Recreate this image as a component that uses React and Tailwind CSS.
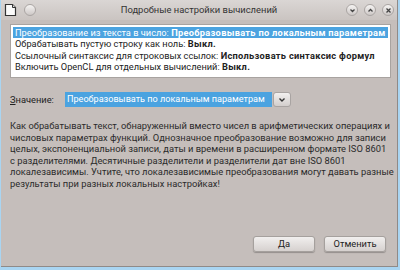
import React from "react";

function CircleBtn({ children }) {
  return (
    <div className="w-[12px] h-[12px] rounded-full border border-[#aaa5a3] bg-gradient-to-b from-[#f6f4f3] to-[#cdc8c6] flex items-center justify-center">
      {children}
    </div>
  );
}

export default function App() {
  const f = { fontFamily: 'Roboto, "Open Sans", sans-serif' };
  return (
    <div className="w-[400px] h-[270px] bg-[#a9d5f2] overflow-hidden" style={f}>
      <div className="w-[397px] h-[267px] ml-[1px] bg-[#c5bebb] border-r border-b border-[#8f8a88] flex flex-col">
        {/* title bar */}
        <div className="h-[20px] shrink-0 flex items-center pl-[3px] pr-[3px] bg-gradient-to-b from-[#dad6d4] to-[#cac4c1]">
          <svg width="13" height="14" viewBox="0 0 13 14" className="mr-[7px]">
            <path d="M1.5 1.5h7l3 3v8h-10z" fill="#fbfbfb" stroke="#333" strokeWidth="1.2" />
            <path d="M8.5 1.5v3h3" fill="#ddd" stroke="#333" strokeWidth="1" />
          </svg>
          <CircleBtn />
          <div className="flex-1 text-center text-[9.4px] text-[#333] pl-[16px]">Подробные настройки вычислений</div>
          <div className="flex gap-[6px]">
            <CircleBtn>
              <svg width="7" height="7" viewBox="0 0 7 7"><path d="M1.5 2.5l2 2 2-2" fill="none" stroke="#444" strokeWidth="1.3" /></svg>
            </CircleBtn>
            <CircleBtn>
              <svg width="7" height="7" viewBox="0 0 7 7"><path d="M1.5 4.5l2-2 2 2" fill="none" stroke="#444" strokeWidth="1.3" /></svg>
            </CircleBtn>
            <CircleBtn>
              <svg width="7" height="7" viewBox="0 0 7 7"><path d="M1.5 1.5l4 4M5.5 1.5l-4 4" fill="none" stroke="#444" strokeWidth="1.3" /></svg>
            </CircleBtn>
          </div>
        </div>
        {/* content */}
        <div className="flex-1 flex flex-col pl-[9px] pr-[6px] pt-[4px]">
          <div className="h-[54px] bg-white border border-[#a8a3a0] pt-[2px] px-[2px] text-[9.25px] leading-[11.4px] text-[#222]">
            <div className="bg-[#4ba3e0] text-white px-[2px] whitespace-nowrap">
              Преобразование из текста в число: <span className="font-bold tracking-[0.3px]">Преобразовывать по локальным параметрам</span>
            </div>
            <div className="px-[2px] whitespace-nowrap">
              Обрабатывать пустую строку как ноль: <span className="font-bold tracking-[0.3px]">Выкл.</span>
            </div>
            <div className="px-[2px] whitespace-nowrap">
              Ссылочный синтаксис для строковых ссылок: <span className="font-bold tracking-[0.3px]">Использовать синтаксис формул</span>
            </div>
            <div className="px-[2px] whitespace-nowrap">
              Включить OpenCL для отдельных вычислений: <span className="font-bold tracking-[0.3px]">Выкл.</span>
            </div>
          </div>
          <div className="flex items-center mt-[14px] h-[15px]">
            <div className="w-[55px] text-[9.3px] text-[#222]"><span className="underline">З</span>начение:</div>
            <div className="h-[15px] w-[207px] bg-[#4ba3e0] text-white text-[9.1px] flex items-center px-[2px] whitespace-nowrap">
              Преобразовывать по локальным параметрам
            </div>
            <div className="h-[15px] w-[18px] ml-[1px] rounded-[3px] border border-[#a9a4a2] bg-gradient-to-b from-[#f2f0ef] to-[#d3cecc] flex items-center justify-center">
              <svg width="8" height="6" viewBox="0 0 8 6"><path d="M1.5 1.5l2.5 2.5 2.5-2.5" fill="none" stroke="#333" strokeWidth="1.4" /></svg>
            </div>
          </div>
          <p className="mt-[13px] text-[9.35px] leading-[11.6px] text-[#2a2a2a] whitespace-nowrap">
            Как обрабатывать текст, обнаруженный вместо чисел в арифметических операциях и<br />
            числовых параметрах функций. Однозначное преобразование возможно для записи<br />
            целых, экспоненциальной записи, даты и времени в расширенном формате ISO 8601<br />
            с разделителями. Десятичные разделители и разделители дат вне ISO 8601<br />
            локалезависимы. Учтите, что локалезависимые преобразования могут давать разные<br />
            результаты при разных локальных настройках!
          </p>
          <div className="flex-1" />
          <div className="flex justify-end gap-[9px] pr-[5px] mb-[14px]">
            <div className="w-[62px] h-[16px] rounded-[3px] border border-[#a5a09d] bg-gradient-to-b from-[#f1efee] to-[#d6d1cf] shadow-[0_1px_1px_rgba(0,0,0,0.25)] flex items-center justify-center text-[9.3px] text-[#222]">Да</div>
            <div className="w-[62px] h-[16px] rounded-[3px] border border-[#a5a09d] bg-gradient-to-b from-[#f1efee] to-[#d6d1cf] shadow-[0_1px_1px_rgba(0,0,0,0.25)] flex items-center justify-center text-[9.3px] text-[#222]">Отменить</div>
          </div>
        </div>
      </div>
    </div>
  );
}
